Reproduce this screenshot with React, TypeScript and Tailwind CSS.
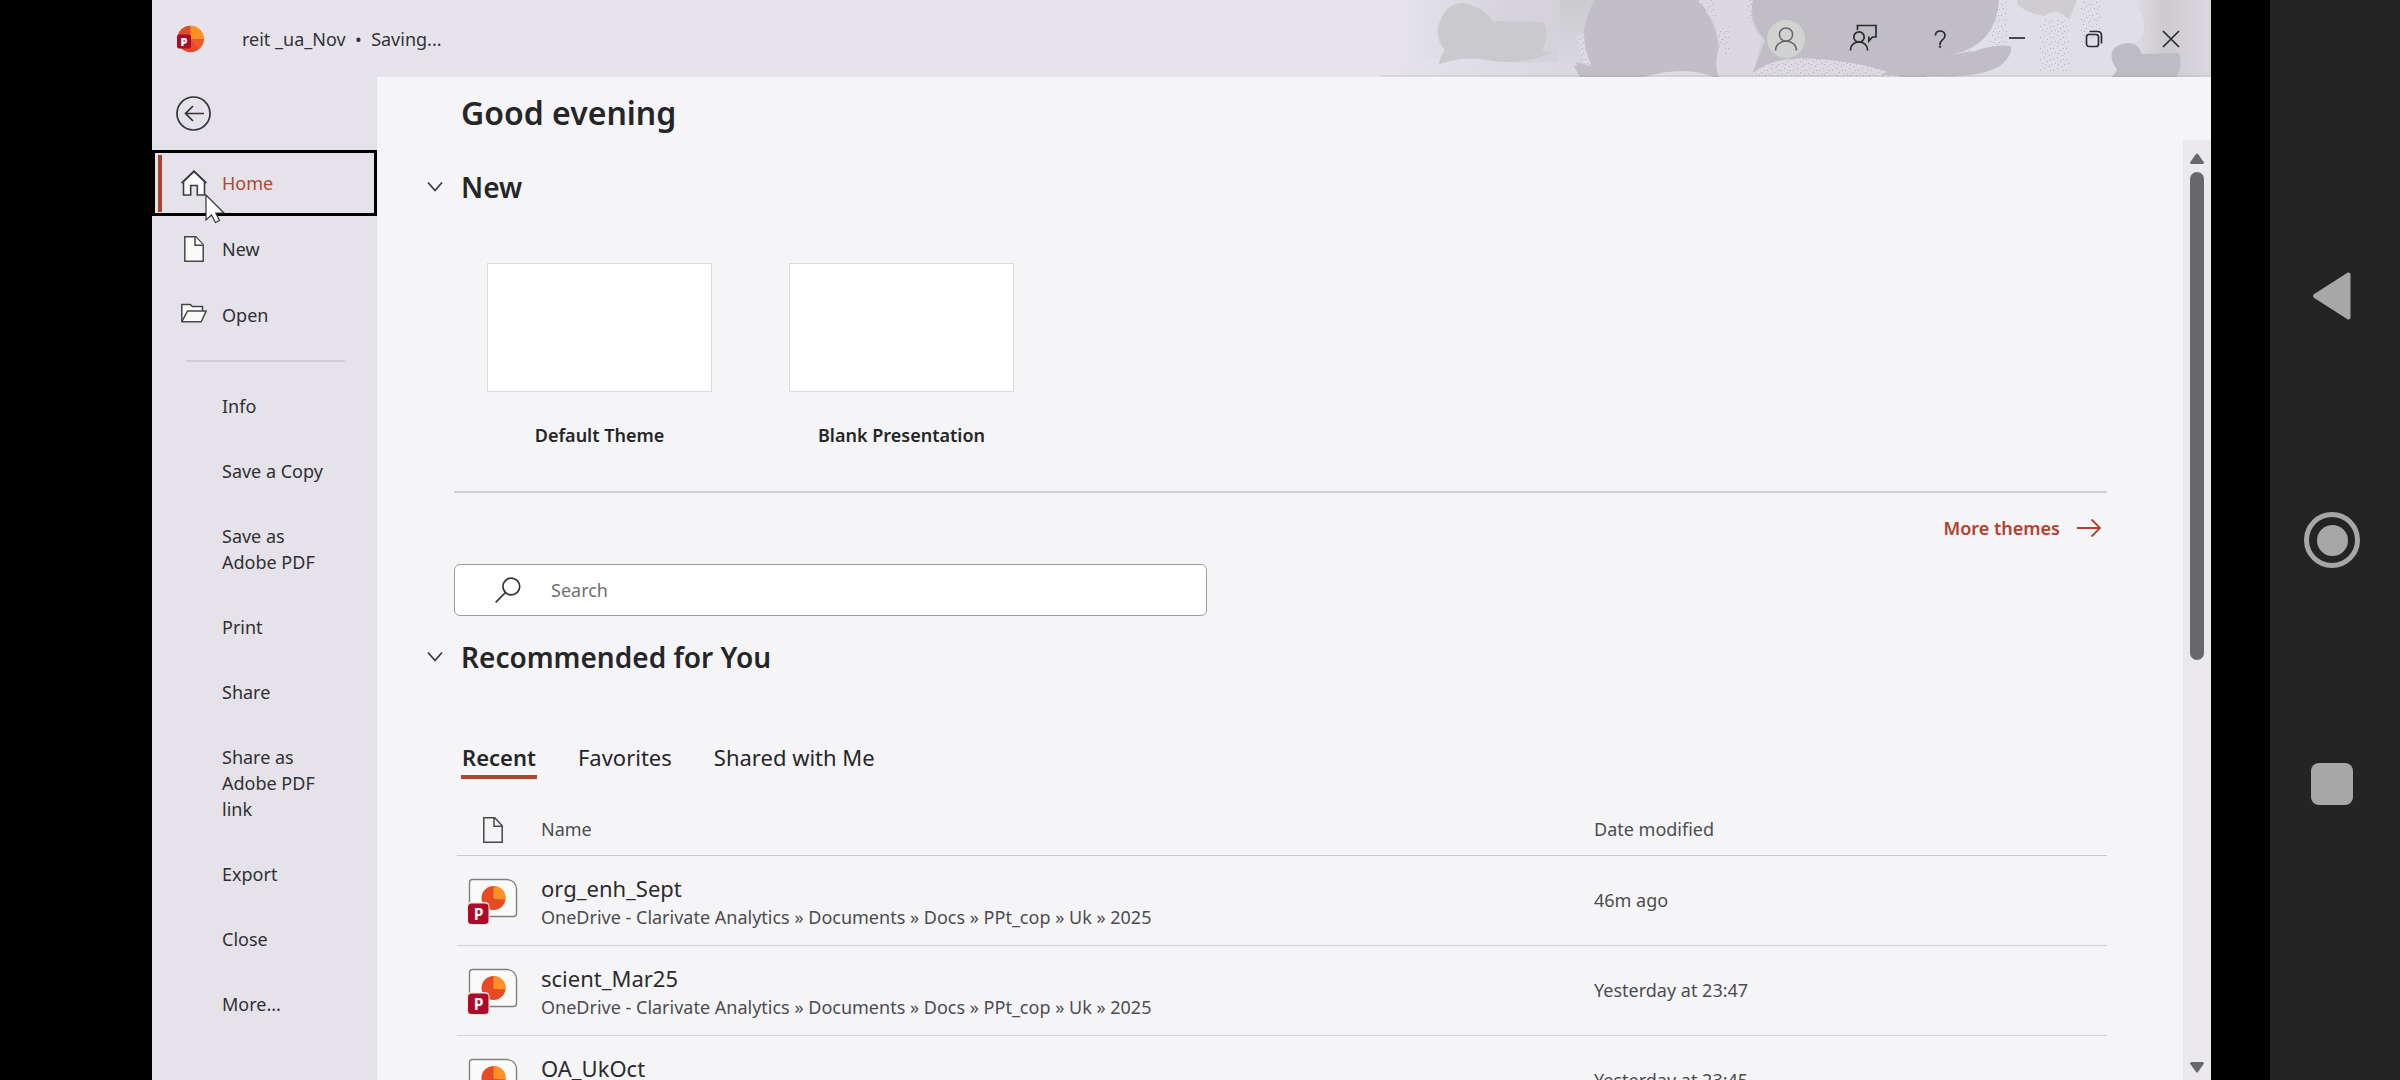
import { useState } from "react";
import type { ReactNode } from "react";

type RecentFile = { name: string; path: string; modified: string };

const DOC_PATH =
  "OneDrive - Clarivate Analytics » Documents » Docs » PPt_cop » Uk » 2025";

const FILES: RecentFile[] = [
  { name: "org_enh_Sept", path: DOC_PATH, modified: "46m ago" },
  { name: "scient_Mar25", path: DOC_PATH, modified: "Yesterday at 23:47" },
  { name: "OA_UkOct", path: DOC_PATH, modified: "Yesterday at 23:45" },
];

const TABS = ["Recent", "Favorites", "Shared with Me"];

const COMMANDS = [
  "Info",
  "Save a Copy",
  "Save as Adobe PDF",
  "Print",
  "Share",
  "Share as Adobe PDF link",
  "Export",
  "Close",
  "More...",
];

const THEMES = ["Default Theme", "Blank Presentation"];

/* ---------- icons ---------- */

function PowerPointLogo() {
  return (
    <svg width="28" height="28" viewBox="0 0 28 28" aria-hidden="true">
      <circle cx="14.5" cy="14" r="13.2" fill="#e8492a" />
      <path d="M14.5.8A13.2 13.2 0 0 0 2 9.500L14.500 14Z" fill="#d9512c" />
      <path d="M14.500.8a13.200 13.200 0 0 1 13.200 13.200H14.500Z" fill="#ff9224" />
      <path d="M14.500 14h13.200a13.200 13.200 0 0 1-5 10.300Z" fill="#ee5a26" />
      <rect x="1" y="9.500" width="14" height="14" rx="2" fill="#ab0d26" />
      <text
        x="8"
        y="20.500"
        textAnchor="middle"
        fontSize="11"
        fontWeight="800"
        fontFamily="Open Sans, sans-serif"
        fill="#fff"
      >
        P
      </text>
    </svg>
  );
}

function FileThumb() {
  return (
    <svg width="52" height="48" viewBox="0 0 52 48" aria-hidden="true">
      <path
        d="M5.500 1.500H40q9 1 9.500 9.500V35.500q0 3-3 3H5.500q-3 0-3-3V4.500q0-3 3-3Z"
        fill="#fafafa"
        stroke="#808080"
        strokeWidth="1.400"
      />
      <circle cx="26.500" cy="20" r="12" fill="#e84a24" />
      <path d="M26.500 8a12 12 0 0 1 12 12q0 1-.2 1.500L28 21q-1.500-.3-1.500-1.500Z" fill="#ff9125" />
      <rect x="0" y="24" width="22.500" height="23" rx="4.500" fill="#f6e8ea" />
      <rect x="1" y="25.500" width="20.500" height="20.500" rx="3.500" fill="#ae0a27" />
      <text
        x="11.500"
        y="41.500"
        textAnchor="middle"
        fontSize="15.500"
        fontWeight="700"
        fontFamily="Open Sans, sans-serif"
        fill="#fff"
      >
        P
      </text>
    </svg>
  );
}

function HomeIcon() {
  return (
    <svg width="28" height="28" viewBox="0 0 28 28" fill="none" stroke="#3c3c3f" strokeWidth="1.600" aria-hidden="true">
      <path d="M3.500 12.500V26h7.200v-9.500h6.600V26h7.200V12.500L14 2.500Z" fill="#fafafa" />
      <path d="M1.500 14.200 14 2.200l12.500 12" />
    </svg>
  );
}

function PageIcon({ fill = "none" }: { fill?: string }) {
  return (
    <svg width="28" height="28" viewBox="0 0 28 28" fill={fill} stroke="#48484a" strokeWidth="1.500" aria-hidden="true">
      <path d="M4.800 1.800h11l7.400 8v16.400H4.800Z" />
      <path d="M15 1.800v8.400h8.200" />
    </svg>
  );
}

function FolderIcon() {
  return (
    <svg width="28" height="28" viewBox="0 0 28 28" fill="#fafafa" stroke="#454547" strokeWidth="1.500" aria-hidden="true">
      <path d="M1.800 20.500V3.500h8.500l2 2h10.200v4.500" />
      <path d="M1.800 20.800 7.500 10h18.700l-5 10.800Z" strokeLinejoin="round" />
    </svg>
  );
}

function Chevron() {
  return (
    <svg width="18" height="12" viewBox="0 0 18 12" fill="none" stroke="#3a3a3c" strokeWidth="1.700" aria-hidden="true">
      <path d="m2 1.500 7 8 7-8" />
    </svg>
  );
}

function SearchIcon() {
  return (
    <svg width="28" height="28" viewBox="0 0 28 28" fill="none" stroke="#333" strokeWidth="1.700" aria-hidden="true">
      <circle cx="17.300" cy="10.500" r="8.400" />
      <path d="m11.500 16.500-9.800 9.800" />
    </svg>
  );
}

function Cursor() {
  return (
    <svg
      className="pointer-events-none absolute top-[44px] left-[53px] z-10"
      width="22"
      height="30"
      viewBox="0 0 22 30"
      aria-hidden="true"
    >
      <path
        d="M1 1v25l5.500-5 4 7.500 4-2-3.700-7.500H19Z"
        fill="#fff"
        stroke="#333"
        strokeWidth="1.200"
      />
    </svg>
  );
}

/* Cloudy shapes behind the window controls */
function TitleArt() {
  return (
    <svg
      className="absolute top-0 right-0 h-full w-[831px]"
      viewBox="0 0 831 77"
      preserveAspectRatio="none"
      aria-hidden="true"
    >
      <defs>
        <linearGradient id="haze" x1="0" x2="1" y1="0" y2="0">
          <stop offset=".02" stopColor="#d5d3d9" stopOpacity="0" />
          <stop offset=".16" stopColor="#d5d3d9" />
          <stop offset="1" stopColor="#d2d0d6" />
        </linearGradient>
        <linearGradient id="fade" x1="0" x2="0" y1="0" y2="1">
          <stop offset="0" stopColor="#cccbd0" />
          <stop offset="1" stopColor="#dddbe1" />
        </linearGradient>
        <linearGradient id="edge" x1="0" x2="1" y1="0" y2="0">
          <stop offset="0" stopColor="#dfdde3" />
          <stop offset=".4" stopColor="#cdcbd0" />
          <stop offset="1" stopColor="#dad8de" />
        </linearGradient>
        <linearGradient id="ground" x1="0" x2="1" y1="0" y2="0">
          <stop offset="0" stopColor="#e5e2ea" />
          <stop offset="1" stopColor="#d9d7dd" />
        </linearGradient>
        <pattern id="specks" width="13" height="11" patternUnits="userSpaceOnUse">
          <path
            d="M1 2h1v1h-1zM6 0h1v1h-1zM10 4h1v1h-1zM4 6h1v1h-1zM8 9h1v1h-1zM2 9h1v1h-1zM12 8h1v1h-1zM7 4h1v1h-1z"
            fill="#b3b0b7"
          />
        </pattern>
      </defs>
      <path d="M0 0h831v77H0Z" fill="url(#haze)" />
      <path d="M20 77V70q30-16 70-12 50 8 100 2l12 17Z" fill="url(#ground)" />
      <path d="M180 0h60l-35 30-8 47h-20Z" fill="url(#fade)" />

      {/* left blob */}
      <path
        d="M59 64q2-9 6-14-8-8-7-22Q63 4 83 3q20 3 30 18l50 1q8 12-1 29l10 2q-30 12-60 8-26-6-52 3Z"
        fill="#c9c9ce"
      />

      {/* centre tree */}
      <path d="M205 25q-6 22 5 41h-16l6 11h144l-3-12q-20-6-14-65h-50Z" fill="#c1bfc5" />
      <path d="M215 0h97q24 14 27 50l-4 27H204L195 62l15 4Q196 30 215 0Z" fill="#c1bfc5" />
      <path d="M264 77q40-12 70 0Z" fill="#dfdde3" />
      <path d="M317 0h56q-6 25 9 38l-10 39h-33q-6-13 1-32Q338 20 317 0Z" fill="#dbd9df" />
      <path d="M317 0h16q6 12 4 20ZM366 0h7q-4 14 2 27l-8-8ZM339 28l10-2v32l-10-12Z" fill="url(#specks)" />
      <path d="M196 37l8-4q0 18 8 33l-10-4Z" fill="#dcdae0" />
      <path d="M196 37l8-4q0 18 8 33l-10-4Z" fill="url(#specks)" />

      {/* big canopy */}
      <path
        d="M373 0h246q-2 38-27 52-22 9-44 4l-2 21h-75L373 72l12-31q-17-20-12-41Z"
        fill="#c0bec4"
      />
      <path d="M373 73q22-18 66-14 50 4 82 18H373Z" fill="#dcdae0" />
      <path d="M373 73q22-18 66-14 50 4 82 18H373Z" fill="url(#specks)" />
      <path d="M619 0h145v77H575q40-10 56-30-30 2-60 8 46-10 48-55Z" fill="#e1dfe6" />
      <path d="M619 0h8v48l-24 0q14-14 16-48ZM660 20h30v52h-30ZM700 2h20v30l-20 20ZM550 55l40-5v4l-38 4Z" fill="url(#specks)" />
      <path d="M546 54q25 8 55-5 18-5 30-3 2 9-11 20-22 12-60 10l-60-1Z" fill="#c0bec4" />
      <path d="M637 0h60l-8 20q-12-14-24-4-18-2-28-12Z" fill="#cfcdd2" />

      {/* right edge */}
      <path d="M753 0q12 14 12 30-4 10-12 12v35h78V0Z" fill="url(#edge)" />
      <path
        d="M732 77q4-5 5-7-11-17 0-24 19-9 25 8l37-1q4 15-3 24Z"
        fill="#bebcc3"
      />
      <path d="M0 75h831v2H0Z" fill="#000" fillOpacity=".05" />
    </svg>
  );
}

function ControlIcon({ children }: { children: ReactNode }) {
  return (
    <svg width="32" height="32" viewBox="0 0 32 32" fill="none" stroke="#2b2b2e" strokeWidth="1.700" aria-hidden="true">
      {children}
    </svg>
  );
}

const CONTROLS: { label: string; icon: ReactNode }[] = [
  {
    label: "Account",
    icon: (
      <>
        <circle cx="16" cy="16" r="19" fill="#d1d3d2" stroke="none" />
        <circle cx="16" cy="11.500" r="6.600" stroke="#666" strokeWidth="1.500" />
        <path d="M5.500 27.500a10.500 9.500 0 0 1 21 0" stroke="#666" strokeWidth="1.500" />
      </>
    ),
  },
  {
    label: "Feedback",
    icon: (
      <>
        <circle cx="12" cy="14" r="5.200" />
        <path d="M3.500 27.500v-1a8.500 7.500 0 0 1 17 0v1" />
        <path d="M10.500 7V2.500H29V14h-3.500L21.800 18v-4.500" />
      </>
    ),
  },
  {
    label: "Help",
    icon: (
      <>
        <path d="M11.500 12.500v-.7Q12 8 16 8q5 .3 5 4.500 0 2.500-3 4.800-2 1.700-2 4v.9" />
        <circle cx="16" cy="23.800" r=".8" fill="#2b2b2e" strokeWidth=".8" />
      </>
    ),
  },
  { label: "Minimize", icon: <path d="M8 15h16" /> },
  {
    label: "Restore",
    icon: (
      <>
        <rect x="8.500" y="11.500" width="12" height="12" rx="2.500" />
        <path d="M11.500 8.500h8q4 0 4 4v8" />
      </>
    ),
  },
  { label: "Close window", icon: <path d="m8 8 16 16M24 8 8 24" /> },
];

/* ---------- layout ---------- */

function TitleBar() {
  return (
    <header className="relative flex h-[77px] shrink-0 items-center bg-[#e6e3eb]">
      <TitleArt />
      <div className="relative ml-6">
        <PowerPointLogo />
      </div>
      <p className="relative ml-[38px] text-[18px] leading-[26px] whitespace-pre text-[#333336]">
        reit _ua_Nov{"  "}•{"  "}Saving...
      </p>
      <div className="relative mr-0.5 ml-auto flex h-full">
        {CONTROLS.map((c) => (
          <button
            key={c.label}
            type="button"
            aria-label={c.label}
            className="flex w-[77px] items-center justify-center [&_svg]:overflow-visible"
          >
            <ControlIcon>{c.icon}</ControlIcon>
          </button>
        ))}
      </div>
    </header>
  );
}

const PLACES = [
  { label: "Home", icon: <HomeIcon /> },
  { label: "New", icon: <PageIcon fill="#fafafa" /> },
  { label: "Open", icon: <FolderIcon /> },
];

function Sidebar() {
  const [active, setActive] = useState("Home");

  return (
    <nav className="w-[225px] shrink-0 text-[18px] leading-[26px] text-[#303033]">
      <button type="button" aria-label="Back" className="mt-[19px] ml-6 block">
        <svg width="36" height="36" viewBox="0 0 36 36" fill="none" stroke="#343437" strokeWidth="1.700" aria-hidden="true">
          <circle cx="17.500" cy="17.500" r="16.500" />
          <path d="M28 17.500H9.500M17 10l-7.500 7.500L17 25" />
        </svg>
      </button>

      <div className="mt-[18px]">
        {PLACES.map(({ label, icon }) => (
          <div key={label} className="relative">
            <button
              type="button"
              onClick={() => setActive(label)}
              className={
                active === label
                  ? "flex h-[66px] w-full items-center border-3 border-black pl-[3px] text-[#b1472f]"
                  : "flex h-[66px] w-full items-center pl-[6px]"
              }
            >
              <span
                className={
                  active === label ? "h-[57px] w-1 bg-[#a94331]" : "h-[57px] w-1"
                }
              />
              <span className="mr-[14px] ml-[18px]">{icon}</span>
              {label}
            </button>
            {label === "Home" && <Cursor />}
          </div>
        ))}
      </div>

      <hr className="mt-[12px] mr-8 ml-[34px] border-t-2 border-[#d0cdd4]" />

      <ul className="mt-[11px]">
        {COMMANDS.map((label) => (
          <li key={label}>
            <button
              type="button"
              className="w-full pt-5 pr-9 pb-[19px] pl-[70px] text-left"
            >
              {label}
            </button>
          </li>
        ))}
      </ul>
    </nav>
  );
}

function SectionTitle({ children }: { children: ReactNode }) {
  return (
    <button type="button" aria-expanded="true" className="-ml-7 flex items-center">
      <Chevron />
      <h2 className="ml-[17px] text-[28px] leading-[40px] font-semibold">
        {children}
      </h2>
    </button>
  );
}

function RecentTable() {
  return (
    <table className="mt-[26px] ml-[3px] w-[calc(100%-3px)] table-fixed text-left text-[18px] text-[#4c4c50]">
      <thead>
        <tr className="h-[50px] border-b border-[#c9c9cd]">
          <th className="w-[84px] pl-[22px]" aria-label="Type">
            <PageIcon />
          </th>
          <th className="font-normal">Name</th>
          <th className="w-[513px] font-normal">Date modified</th>
        </tr>
      </thead>
      <tbody>
        {FILES.map((f) => (
          <tr key={f.name} className="h-[90px] border-b border-[#d3d3d7]">
            <td className="pt-1 pl-[10px]">
              <FileThumb />
            </td>
            <td className="pt-1">
              <a href="#" className="block">
                <span className="block text-[22px] leading-[30px] text-[#2b2b2e]">
                  {f.name}
                </span>
                <span className="block leading-[28px]">{f.path}</span>
              </a>
            </td>
            <td>{f.modified}</td>
          </tr>
        ))}
      </tbody>
    </table>
  );
}

function Home() {
  const [tab, setTab] = useState(TABS[0]);

  return (
    <main className="min-w-0 flex-1 overflow-hidden pt-3 pr-[76px] pl-[77px] text-[#262628]">
      <h1 className="ml-[7px] text-[32px] leading-[48px] font-semibold">
        Good evening
      </h1>

      <section className="mt-[30px]">
        <SectionTitle>New</SectionTitle>
        <ul className="mt-[56px] ml-[33px] flex gap-[77px]">
          {THEMES.map((t) => (
            <li key={t}>
              <button type="button" className="block w-[225px] text-center">
                <span className="block h-[129px] border border-[#dcdcdf] bg-white" />
                <span className="mt-[30px] block text-[18px] leading-[26px] font-semibold whitespace-nowrap">
                  {t}
                </span>
              </button>
            </li>
          ))}
        </ul>
        <hr className="mt-[43px] border-t-2 border-[#cfcfd2]" />
        <a
          href="#"
          className="mt-[22px] ml-auto flex w-fit items-center gap-4 pr-[5px] text-[18px] leading-[26px] font-semibold text-[#b3402e]"
        >
          More themes
          <svg width="26" height="20" viewBox="0 0 26 20" fill="none" stroke="currentColor" strokeWidth="1.800" aria-hidden="true">
            <path d="M1 10h23M15.500 1.500 24 10l-8.500 8.500" />
          </svg>
        </a>
      </section>

      <div role="search" className="mt-[23px] flex h-[52px] w-[753px] items-center rounded-md border border-[#9c9c9f] bg-white pl-[39px]">
        <label htmlFor="search" aria-label="Search">
          <SearchIcon />
        </label>
        <input
          id="search"
          type="search"
          placeholder="Search"
          className="ml-[29px] flex-1 text-[18px] leading-[26px] outline-none placeholder:text-[#707073]"
        />
      </div>

      <section className="mt-[21px]">
        <SectionTitle>Recommended for You</SectionTitle>
        <div role="tablist" className="mt-[64px] ml-[7px] flex gap-10 text-[22px] leading-[32px]">
          {TABS.map((t) => (
            <button
              key={t}
              type="button"
              role="tab"
              aria-selected={tab === t}
              onClick={() => setTab(t)}
              className={
                tab === t
                  ? "border-b-4 border-[#b04632] px-px pb-[2px] font-semibold"
                  : "border-b-4 border-transparent px-px pb-[2px]"
              }
            >
              {t}
            </button>
          ))}
        </div>
        <RecentTable />
      </section>
    </main>
  );
}

function Scrollbar() {
  return (
    <div className="mt-[63px] flex w-7 shrink-0 flex-col items-center bg-[#ebe9ed] pt-[13px] pb-[7px]" aria-hidden="true">
      <svg width="14" height="11" viewBox="0 0 14 11" fill="#68686a">
        <path d="M6 1q1-1 2 0l6 8.500q0 1.500-1.500 1.500h-11Q0 11 0 9.500Z" />
      </svg>
      <div className="mt-2 h-[53%] w-[14px] rounded-full bg-[#68686a]" />
      <svg className="mt-auto" width="14" height="11" viewBox="0 0 14 11" fill="#68686a">
        <path d="M6 10q1 1 2 0l6-8.500Q14 0 12.500 0h-11Q0 0 0 1.500Z" />
      </svg>
    </div>
  );
}

function DeviceNav() {
  return (
    <div className="flex w-[130px] shrink-0 flex-col items-center justify-center gap-[188px] bg-[#242424] pr-[6px]">
      <button type="button" aria-label="Back" className="flex size-14 items-center justify-center">
        <svg width="40" height="50" viewBox="0 0 40 50" fill="#a7a7a7" stroke="#a7a7a7" strokeWidth="4" strokeLinejoin="round">
          <path d="M3 25 36.500 3.500v43Z" />
        </svg>
      </button>
      <button type="button" aria-label="Home" className="flex size-14 items-center justify-center rounded-full border-5 border-[#a7a7a7]">
        <span className="size-[31px] rounded-full bg-[#a7a7a7]" />
      </button>
      <button type="button" aria-label="Overview" className="flex size-14 items-center justify-center">
        <span className="size-[42px] rounded-lg bg-[#a7a7a7]" />
      </button>
    </div>
  );
}

export default function App() {
  return (
    <div className="flex h-screen overflow-hidden bg-black font-['Noto_Sans','Open_Sans',sans-serif]">
      <div className="mr-[59px] ml-[152px] flex min-w-0 flex-1 flex-col bg-[#e5e2e9]">
        <TitleBar />
        <div className="flex min-h-0 flex-1">
          <Sidebar />
          <div className="flex min-w-0 flex-1 bg-[#f5f5f7]">
            <Home />
            <Scrollbar />
          </div>
        </div>
      </div>
      <DeviceNav />
    </div>
  );
}
